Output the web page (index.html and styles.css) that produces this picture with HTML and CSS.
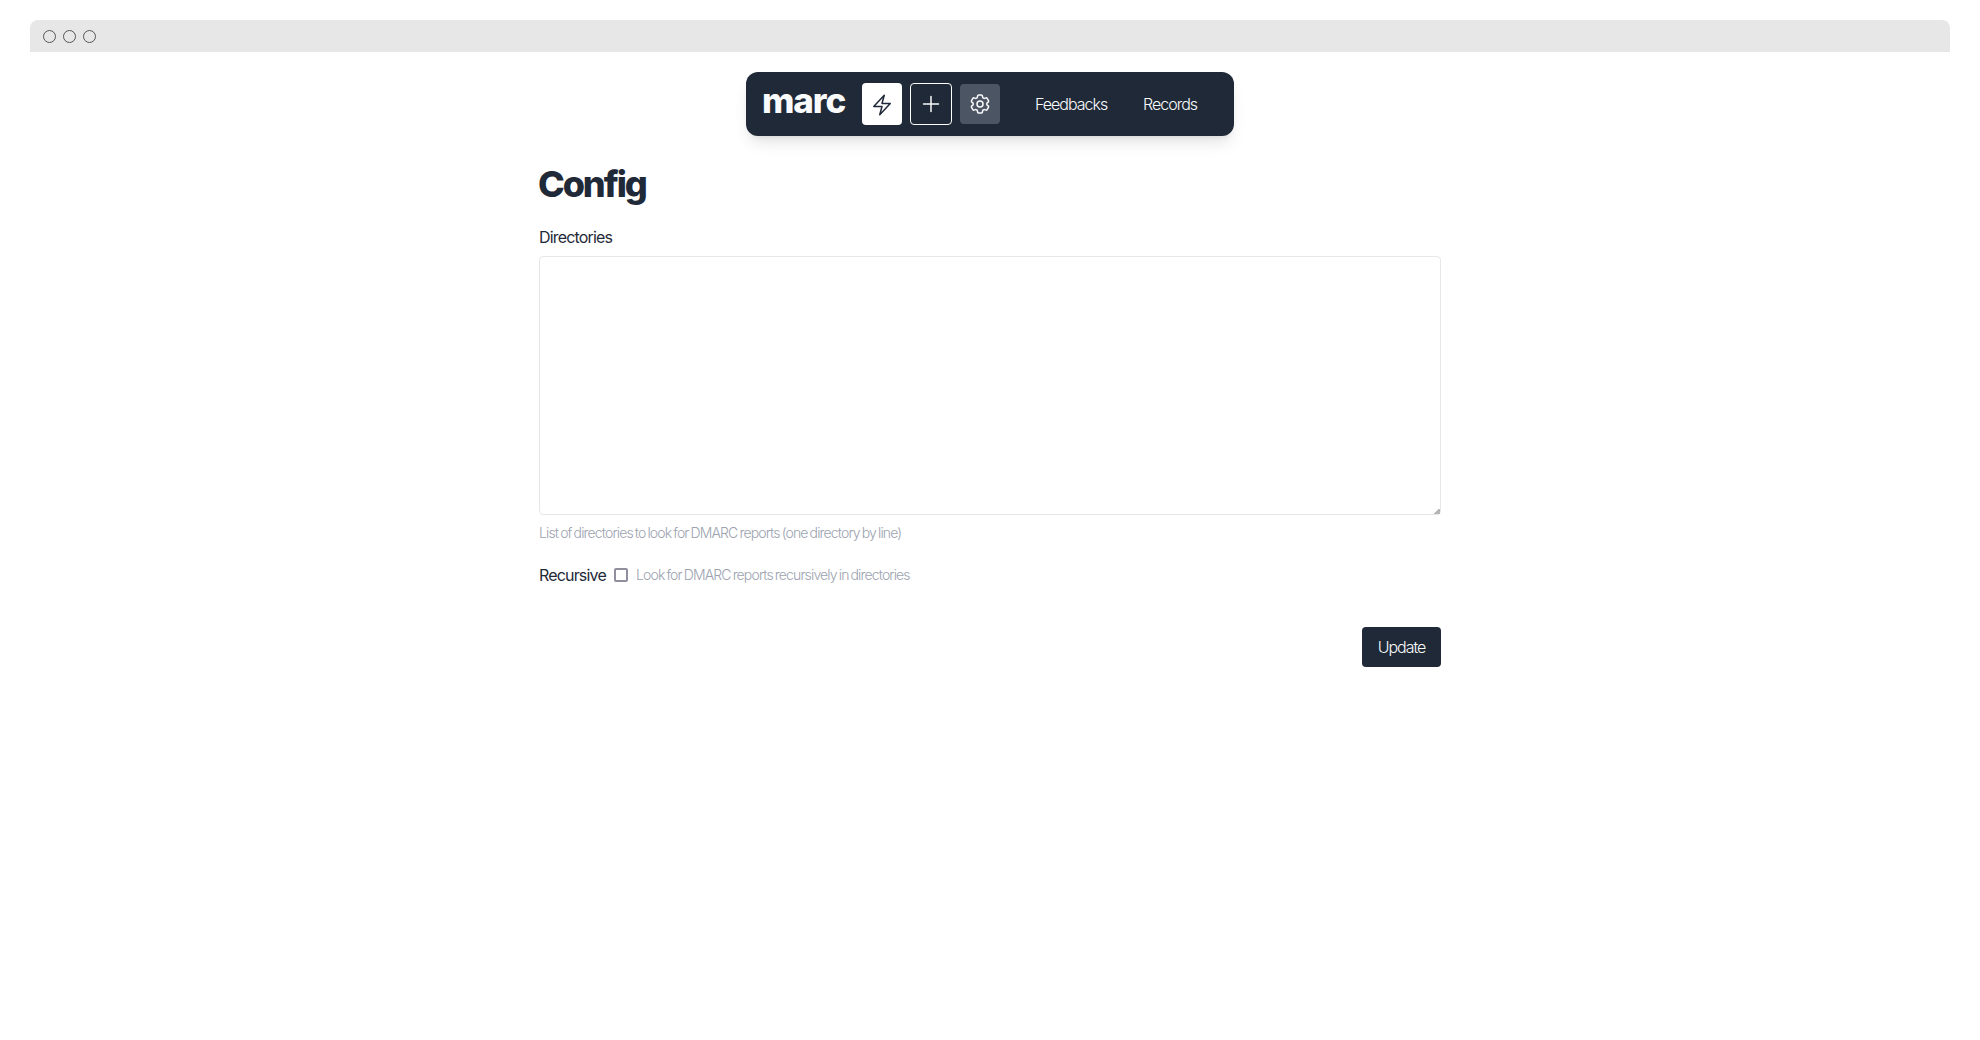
FILE: index.html
```html
<!DOCTYPE html>
<html lang="en">
<head>
<meta charset="utf-8">
<title>marc – Config</title>
<link rel="stylesheet" href="styles.css">
</head>
<body>
<div class="window-bar"><span class="dot"></span><span class="dot"></span><span class="dot"></span></div>
<nav class="nav">
  <a class="logo">marc</a>
  <div class="actions">
    <a class="action action-run"><svg class="icon" viewBox="0 0 24 24"><path d="m3.75 13.5 10.5-11.25L12 10.5h8.25L9.75 21.75 12 13.5H3.75Z"/></svg></a>
    <a class="action action-add"><svg class="icon" viewBox="0 0 24 24"><path d="M12 4.5v15m7.5-7.5h-15"/></svg></a>
    <a class="action action-config"><svg class="icon" viewBox="0 0 24 24"><path d="M9.594 3.94c.09-.542.56-.94 1.11-.94h2.593c.55 0 1.02.398 1.11.94l.213 1.281c.063.374.313.686.645.87.074.04.147.083.22.127.325.196.72.257 1.075.124l1.217-.456a1.125 1.125 0 0 1 1.37.49l1.296 2.247a1.125 1.125 0 0 1-.26 1.431l-1.003.827c-.293.241-.438.613-.43.992a7.723 7.723 0 0 1 0 .255c-.008.378.137.75.43.991l1.004.827c.424.35.534.955.26 1.43l-1.298 2.247a1.125 1.125 0 0 1-1.369.491l-1.217-.456c-.355-.133-.75-.072-1.076.124a6.47 6.47 0 0 1-.22.128c-.331.183-.581.495-.644.869l-.213 1.281c-.09.543-.56.94-1.11.94h-2.594c-.55 0-1.019-.398-1.11-.94l-.213-1.281c-.062-.374-.312-.686-.644-.87a6.52 6.52 0 0 1-.22-.127c-.325-.196-.72-.257-1.076-.124l-1.217.456a1.125 1.125 0 0 1-1.369-.49l-1.297-2.247a1.125 1.125 0 0 1 .26-1.431l1.004-.827c.292-.24.437-.613.43-.991a6.932 6.932 0 0 1 0-.255c.007-.38-.138-.751-.43-.992l-1.004-.827a1.125 1.125 0 0 1-.26-1.43l1.297-2.247a1.125 1.125 0 0 1 1.37-.491l1.216.456c.356.133.751.072 1.076-.124.072-.044.146-.086.22-.128.332-.183.582-.495.644-.869l.214-1.28Z"/><path d="M15 12a3 3 0 1 1-6 0 3 3 0 0 1 6 0Z"/></svg></a>
  </div>
  <a class="link feedbacks">Feedbacks</a>
  <a class="link records">Records</a>
</nav>
<main class="page">
  <h1 class="title">Config</h1>
  <form>
    <label class="label" for="dirs">Directories</label>
    <textarea class="input" id="dirs"></textarea>
    <p class="help help-dirs">List of directories to look for DMARC reports (one directory by line)</p>
    <div class="check-row">
      <label class="label label-recursive" for="rec">Recursive</label>
      <input class="checkbox" type="checkbox" id="rec">
      <span class="help help-recursive">Look for DMARC reports recursively in directories</span>
    </div>
    <div class="submit-row"><button class="submit" type="button">Update</button></div>
  </form>
</main>
</body>
</html>
```
FILE: styles.css
```css
* { box-sizing: border-box; margin: 0; padding: 0; }
body {
  background: #fff;
  color: #1f2937;
  font: 300 16px/24px Inter, "Liberation Sans", sans-serif;
  padding: 20px 30px 0;
}
.window-bar {
  display: flex;
  align-items: center;
  gap: 7px;
  height: 32px;
  padding: 1px 0 0 13px;
  background: #e7e7e7;
  border-radius: 8px 8px 0 0;
}
.dot { width: 13px; height: 13px; border: 1px solid #555; border-radius: 50%; }
.nav {
  display: flex;
  align-items: center;
  width: 488px;
  height: 64px;
  margin: 20px auto 0;
  padding-left: 16px;
  background: #1f2937;
  border-radius: 12px;
  color: #f9fafb;
  box-shadow: 0 10px 15px -3px rgba(0, 0, 0, .1), 0 4px 6px -4px rgba(0, 0, 0, .1);
}
.logo {
  width: 100px;
  padding-bottom: 9px;
  font-size: 35px;
  line-height: 40px;
  font-weight: 800;
  letter-spacing: -1.1px;
}
.actions { display: flex; align-items: center; gap: 8px; }
.action { display: flex; align-items: center; justify-content: center; width: 40px; height: 40px; border-radius: 4px; }
.action-run { height: 42px; padding-top: 2px; background: #fff; color: #1f2937; }
.action-add { width: 42px; height: 42px; border: 1px solid #fff; }
.action-config { background: #4b5563; }
.icon { width: 24px; height: 24px; fill: none; stroke: currentColor; stroke-width: 1.5; stroke-linecap: round; stroke-linejoin: round; }
.link { white-space: nowrap; letter-spacing: -1px; }
.feedbacks { width: 108px; margin-left: 35px; }
.page { width: 902px; margin: 24px auto 0; }
.title { margin-left: -1px; font-size: 36px; line-height: 48px; font-weight: 800; letter-spacing: -2.1px; }
.label { display: block; font-weight: 400; letter-spacing: -.83px; margin-top: 17px; white-space: nowrap; }
.input {
  display: block;
  width: 902px;
  height: 259px;
  margin-top: 7px;
  border: 1px solid #e5e7eb;
  border-radius: 4px;
  background: #fff;
  resize: vertical;
}
.input::-webkit-resizer { background: linear-gradient(135deg, transparent 80%, #b5b5b5 80%); }
.help { font-size: 14px; line-height: 20px; color: #9ca3af; letter-spacing: -.85px; word-spacing: -1.1px; white-space: nowrap; }
.help-dirs { margin-top: 8px; }
.check-row { display: flex; align-items: center; height: 24px; margin-top: 20px; }
.label-recursive { width: 75px; margin: 0; }
.checkbox { appearance: none; width: 14px; height: 14px; border: 2px solid #8f8f9d; border-radius: 2px; background: #fff; }
.help-recursive { margin-left: 8px; }
.submit-row { display: flex; justify-content: flex-end; margin-top: 40px; }
.submit {
  width: 79px;
  height: 40px;
  border: 0;
  border-radius: 4px;
  background: #1f2937;
  color: #f9fafb;
  font: inherit;
  letter-spacing: -1px;
}
```
